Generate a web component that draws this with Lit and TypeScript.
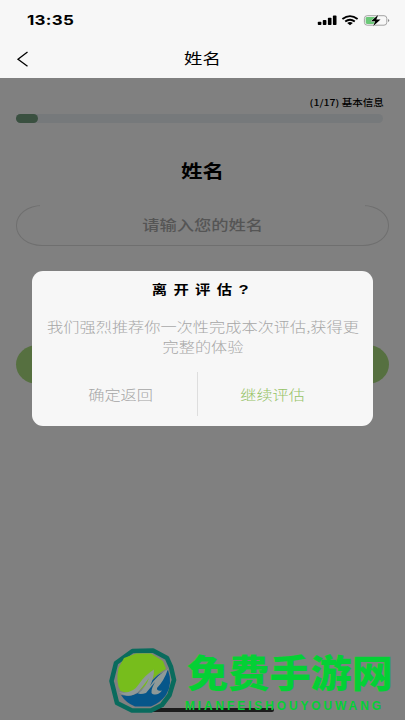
import { LitElement, html, css } from "lit";
import { customElement } from "lit/decorators.js";

@customElement("status-bar")
class StatusBar extends LitElement {
  static styles = css`
    :host { display: flex; justify-content: space-between; height: 40px; padding: 0 14px 0 27px; align-items: center; }
    .time { font: 700 13.6px/20px Inter, "Liberation Sans", sans-serif; transform: scaleX(1.25); transform-origin: left; color: #000; letter-spacing: .2px; }
    .icons { display: block; }
  `;
  render() {
    return html`
      <span class="time">13:35</span>
      <svg class="icons" width="76" height="14" viewBox="314.5 13 76 14">
        <g fill="#000">
          <rect x="317.3" y="21.7" width="3.6" height="3.4" rx=".8" />
          <rect x="322.3" y="20" width="3.6" height="5.1" rx=".8" />
          <rect x="327.4" y="17.8" width="3.6" height="7.3" rx=".8" />
          <rect x="332.4" y="15.6" width="3.6" height="9.5" rx=".8" />
        </g>
        <g fill="none" stroke="#000" stroke-width="1.9">
          <path d="M341.9 18.9Q349.5 13.3 357.1 18.9" />
          <path d="M344.7 21.5Q349.5 18 354.3 21.5" />
        </g>
        <path d="M346.7 22.9Q349.5 21.3 352.3 22.9L349.5 25.3Z" />
        <rect x="363.9" y="15.7" width="22.4" height="9.5" rx="2.8" fill="none" stroke="#999" stroke-width=".9" />
        <rect x="365.2" y="16.9" width="9.8" height="7.1" rx="1.4" fill="#6bc878" />
        <path d="M387.5 18.9Q390.2 20.3 387.5 21.9Z" fill="#888" />
        <path d="M377.8 14.8L370.5 21.2H374.7L372.6 26.2L380 19.6H375.8Z" stroke="#f7f7f7" stroke-width=".8" paint-order="stroke" />
      </svg>`;
  }
}

@customElement("leave-dialog")
class LeaveDialog extends LitElement {
  static styles = css`
    :host { display: flex; flex-direction: column; align-items: center; box-sizing: border-box; width: 341px; height: 155px; padding-top: 8px; border-radius: 11px; background: #f7f7f7; font-family: "Noto Sans CJK SC", sans-serif; }
    .title { font-weight: 700; font-size: 12.6px; line-height: 20px; letter-spacing: 5.2px; margin-left: 1px; color: #000; transform: scaleX(1.218); }
    .ask { font-family: "Liberation Sans", sans-serif; font-size: 13.5px; }
    .body { margin-top: 17px; font-size: 13.3px; line-height: 19.5px; font-weight: 300; text-align: center; white-space: nowrap; color: #a6a6a6; transform: scaleX(1.218); }
    .actions { display: grid; grid-template-columns: 164.5px 1fr; align-self: stretch; margin-top: 16px; height: 44px; }
    .action { display: flex; align-items: center; justify-content: center; font-size: 13.3px; font-weight: 300; color: #a6a6a6; padding-left: 13px; }
    .go { color: #95c265; border-left: 1px solid #dedede; padding: 0 25px 0 0; }
    .label { transform: scaleX(1.218); }
  `;
  render() {
    return html`
      <div class="title">离开评估<span class="ask">?</span></div>
      <div class="body">我们强烈推荐你一次性完成本次评估,获得更<br />完整的体验</div>
      <div class="actions">
        <div class="action"><span class="label">确定返回</span></div>
        <div class="action go"><span class="label">继续评估</span></div>
      </div>`;
  }
}

@customElement("site-mark")
class SiteMark extends LitElement {
  static styles = css`
    :host { display: flex; align-items: flex-end; width: 290px; height: 87px; color: #04d035; }
    .logo { flex: none; height: 72px; margin-bottom: 3px; }
    .words { display: block; flex: none; }
    .name { font: 900 38px "Noto Sans CJK SC", sans-serif; }
    .latin { font: 700 12px "Liberation Sans", sans-serif; }
  `;
  render() {
    return html`
      <svg class="logo" width="76" height="72" viewBox="105 645 76 72">
        <path d="M132.5 651L153 650.5L167 658L171 667L174 680L169.5 695L162 705L151 710.5H132L117 703L111.5 681L116 663Z" fill="#808080" stroke="#096b5d" stroke-width="4.6" stroke-linejoin="round" />
        <path d="M120.5 691Q115.5 683 118.5 668L124 658L136 653.5H151L163 661L166 669Q158 673 151 681L140 690Q130 695 120.5 691Z" fill="#77bd1c" />
        <path d="M121 695Q133 698 142 690L158 675L168 670Q173 684 166 695Q160 703 151 706.5H135Q126 703 121 695Z" fill="#06568a" />
        <path d="M118.5 692Q132 695 139 684Q145 675 154 669.5Q154 678 150 686Q157 675 168 669Q164 681 157 688Q156.5 691.5 162 690.5Q158 696 152.5 694Q149.5 692 155 682L146 693Q141 694.5 138 693.5Q146 687 149 678Q141 689 137.5 692.5Q129 699 118.5 692Z" fill="#8e9998" />
      </svg>
      <svg class="words" width="218" height="87" viewBox="181 633 218 87" fill="currentColor">
        <text class="name" x="187" y="686.5" textLength="206" lengthAdjust="spacingAndGlyphs">免费手游网</text>
        <text class="latin" x="185" y="710.3" textLength="196">MIANFEISHOUYOUWANG</text>
      </svg>`;
  }
}

@customElement("app-root")
class AppRoot extends LitElement {
  static styles = css`
    :host { display: flex; flex-direction: column; position: relative; width: 405px; height: 720px; overflow: hidden; background: #808080; font-family: "Noto Sans CJK SC", sans-serif; color: #000; }
    .top { height: 78px; background: #f7f7f7; }
    .nav { display: grid; grid-template-columns: 40px 1fr 40px; height: 38px; align-items: center; }
    .back { margin-left: 16px; }
    .wide { transform: scaleX(1.218); }
    .title { text-align: center; font-size: 15.1px; line-height: 22px; margin-top: -5px; }
    .page { display: flex; flex-direction: column; padding: 18px 16px 0; }
    .step { align-self: flex-end; margin-right: 5.5px; font-size: 8.8px; line-height: 14px; font-weight: 500; transform: scaleX(1.2); transform-origin: right; }
    .track { height: 9px; margin: 3.5px 6px 0 0; border-radius: 5px; background: #76797b; }
    .fill { width: 22px; height: 9px; border-radius: 5px; background: #3a5040; }
    .heading { margin-top: 33px; text-align: center; font-size: 17.7px; line-height: 28px; font-weight: 700; }
    .field { position: relative; display: flex; align-items: center; justify-content: center; box-sizing: border-box; height: 41px; margin-top: 21.5px; border: 1px solid #6f6f6f; border-radius: 26px / 20px; font-size: 14.2px; font-weight: 500; color: #555; padding-bottom: 3px; }
    .field::before { content: ""; position: absolute; left: 23px; right: 23px; top: -1px; height: 2px; background: #808080; }
    .submit { height: 39px; margin-top: 98.5px; border-radius: 22px / 20px; background: #567040; }
    .dialog { position: absolute; left: 32px; top: 271px; }
    .home { position: absolute; left: 131px; top: 708px; width: 143px; height: 4px; border-radius: 2px; background: #1c1c1c; }
    .mark { position: absolute; left: 105px; top: 633px; }
  `;
  render() {
    return html`
      <header class="top">
        <status-bar></status-bar>
        <div class="nav">
          <svg class="back" width="13" height="17" viewBox="0 0 13 17"><path d="M11.5 1L2 8.3L11.5 15.3" fill="none" stroke="#000" stroke-width="1.3" /></svg>
          <div class="title wide">姓名</div>
        </div>
      </header>
      <main class="page">
        <div class="step">(1/17) 基本信息</div>
        <div class="track"><div class="fill"></div></div>
        <div class="heading wide">姓名</div>
        <div class="field"><span class="wide">请输入您的姓名</span></div>
        <div class="submit"></div>
      </main>
      <div class="home"></div>
      <leave-dialog class="dialog"></leave-dialog>
      <site-mark class="mark"></site-mark>`;
  }
}
